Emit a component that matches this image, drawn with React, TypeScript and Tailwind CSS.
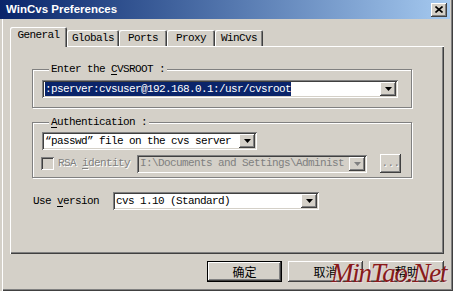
import React from "react";

const mono = "font-['Liberation_Mono',monospace] text-[11px] tracking-[-0.6px]";
const raised =
  "bg-[#d4d0c8] shadow-[inset_-1px_-1px_0_#404040,inset_1px_1px_0_#fff,inset_-2px_-2px_0_#808080]";
const sunken =
  "shadow-[inset_1px_1px_0_#808080,inset_-1px_-1px_0_#fff,inset_2px_2px_0_#404040,inset_-2px_-2px_0_#d4d0c8]";

const Arrow = ({ disabled }: { disabled?: boolean }) => (
  <div className={`${raised} w-[16px] h-full flex items-center justify-center`}>
    <svg width="7" height="4" viewBox="0 0 7 4">
      <path d="M0 0h7L3.5 4z" fill={disabled ? "#808080" : "#000"} />
    </svg>
  </div>
);

const Combo = ({
  className,
  children,
  disabled,
}: {
  className: string;
  children: React.ReactNode;
  disabled?: boolean;
}) => (
  <div
    className={`${className} ${sunken} ${disabled ? "bg-[#d4d0c8]" : "bg-white"} flex p-[2px]`}
  >
    <div className={`flex-1 flex items-center pl-[1px] overflow-hidden whitespace-nowrap ${mono}`}>
      {children}
    </div>
    <Arrow disabled={disabled} />
  </div>
);

const Tab = ({ label, active, className }: { label: string; active?: boolean; className: string }) => (
  <div
    className={`${className} ${mono} flex items-center justify-center rounded-t-[2px] bg-[#d4d0c8] shadow-[inset_1px_1px_0_#fff,inset_-1px_0_0_#404040,inset_-2px_0_0_#808080] ${
      active ? "relative z-10 h-[20px] mb-[-1px] pb-[3px]" : "h-[16px]"
    }`}
  >
    {label}
  </div>
);

const Group = ({
  legend,
  className,
  children,
}: {
  legend: React.ReactNode;
  className: string;
  children: React.ReactNode;
}) => (
  <fieldset
    className={`${className} w-[380px] border border-[#808080] shadow-[inset_1px_1px_0_#fff,1px_1px_0_#fff]`}
  >
    <legend className={`${mono} ml-[7px] px-[2px] leading-[14px] bg-[#d4d0c8]`}>{legend}</legend>
    {children}
  </fieldset>
);

const Button = ({ label, primary }: { label: string; primary?: boolean }) => (
  <div
    className={`w-[75px] h-[21px] flex items-center justify-center text-[12px] text-black font-['Noto_Sans_CJK_SC',sans-serif] ${
      primary
        ? "bg-[#d4d0c8] border border-black shadow-[inset_-1px_-1px_0_#404040,inset_1px_1px_0_#fff,inset_-2px_-2px_0_#808080]"
        : raised
    }`}
  >
    {label}
  </div>
);

export default function App() {
  return (
    <div className="relative w-[453px] h-[291px] overflow-hidden bg-[#d4d0c8] text-black shadow-[inset_2px_0_0_#d4d0c8,inset_3px_0_0_#fff,inset_-1px_-1px_0_#404040,inset_-2px_-2px_0_#808080]">
      {/* title bar */}
      <div className="w-[450px] h-[19px] bg-linear-to-r from-[#0a246a] to-[#a6caf0] flex items-center justify-between pl-[6px] pr-[3px]">
        <span className="font-['Liberation_Sans',sans-serif] font-bold text-[11.5px] text-white leading-none">
          WinCvs Preferences
        </span>
        <div className={`${raised} w-[16px] h-[14px] flex items-center justify-center`}>
          <svg width="8" height="7" viewBox="0 0 8 7">
            <path d="M0.5 0.5L7.5 6.5M7.5 0.5L0.5 6.5" stroke="#000" strokeWidth="1.6" />
          </svg>
        </div>
      </div>

      {/* tabs */}
      <div className="mt-[8px] pl-[10px] h-[19px] flex items-end">
        <Tab label="General" active className="w-[57px]" />
        <Tab label="Globals" className="w-[52px]" />
        <Tab label="Ports" className="w-[48px]" />
        <Tab label="Proxy" className="w-[48px]" />
        <Tab label="WinCvs" className="w-[48px]" />
      </div>

      {/* tab panel */}
      <div className="ml-[10px] w-[434px] h-[208px] flex flex-col pl-[22px] shadow-[inset_1px_1px_0_#fff,inset_-1px_-1px_0_#404040,inset_-2px_-2px_0_#808080]">
        <Group
          className="mt-[16px] pt-[4px] pl-[9px] pb-[9px]"
          legend={
            <>
              Enter the <span className="underline underline-offset-2">C</span>VSROOT :
            </>
          }
        >
          <Combo className="w-[356px] h-[18px]">
            <span className="bg-[#0a246a] text-white leading-[14px]">
              :pserver:cvsuser@192.168.0.1:/usr/cvsroot
            </span>
          </Combo>
        </Group>

        <Group
          className="mt-[7px] pt-[3px] pl-[9px] pb-[4px] flex flex-col gap-[4px]"
          legend={
            <>
              <span className="underline underline-offset-2">A</span>uthentication :
            </>
          }
        >
          <Combo className="w-[215px] h-[18px]">
            <span>“passwd” file on the cvs server</span>
          </Combo>
          <div className="flex items-center h-[19px] -ml-[1px]">
            <div className="w-[13px] h-[13px] bg-[#d4d0c8] shadow-[inset_1px_1px_0_#808080,inset_-1px_-1px_0_#fff,inset_2px_2px_0_#404040,inset_-2px_-2px_0_#d4d0c8]" />
            <span className={`${mono} ml-[4px] w-[79px] text-[#808080] [text-shadow:1px_1px_0_#fff]`}>
              RSA <span className="underline underline-offset-2">i</span>dentity
            </span>
            <Combo className="w-[230px] h-[18px]" disabled>
              <span className="text-[#808080]">I:\Documents and Settings\Administ</span>
            </Combo>
            <div
              className={`${raised} ml-[13px] w-[21px] h-[19px] flex items-center justify-center ${mono} text-[#808080] [text-shadow:1px_1px_0_#fff]`}
            >
              ...
            </div>
          </div>
        </Group>

        <div className="mt-[14px] flex items-center h-[18px]">
          <span className={`${mono} w-[81px] pl-[1px]`}>
            Use <span className="underline underline-offset-2">v</span>ersion
          </span>
          <Combo className="w-[206px] h-[18px]">
            <span>cvs 1.10 (Standard)</span>
          </Combo>
        </div>
      </div>

      {/* buttons */}
      <div className="mt-[7px] pr-[9px] flex justify-end gap-[6px]">
        <Button label="确定" primary />
        <Button label="取消" />
        <Button label="帮助" />
      </div>

      {/* watermark */}
      <div className="absolute left-[331px] top-[260px] font-['Liberation_Serif',serif] italic text-[27px] tracking-[-1.2px] leading-none text-[#8a1a1a] [text-shadow:1px_1px_0_#eadada]">
        MinTao.Net
      </div>
    </div>
  );
}
